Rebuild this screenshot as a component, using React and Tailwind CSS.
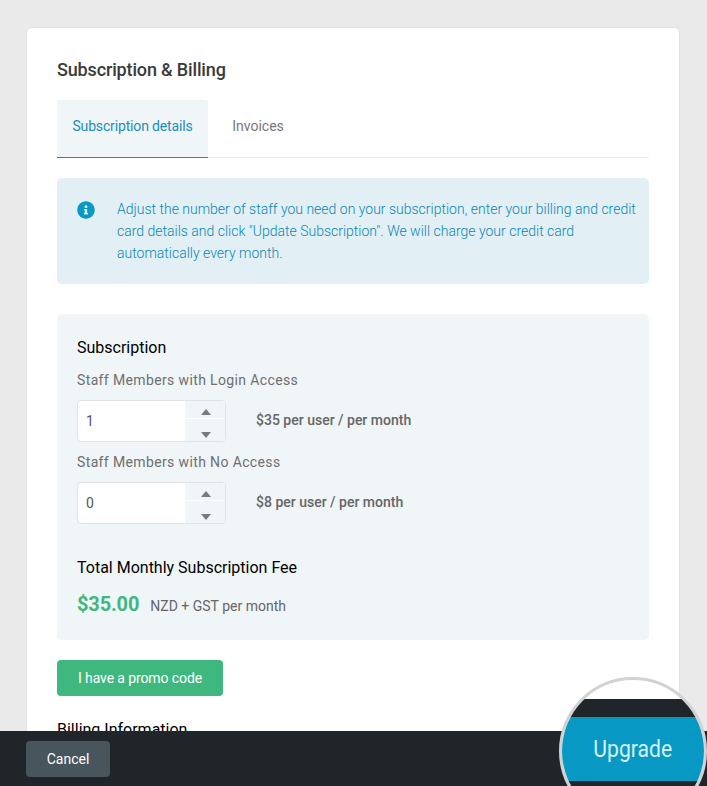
import { FaInfoCircle } from "react-icons/fa";

function Stepper({ value, valueClass }) {
  return (
    <div className="flex h-[42px] w-[149px] overflow-hidden rounded-[4px] border border-[#dfe3e6] bg-white">
      <div className={`flex flex-1 items-center pl-2 text-[14px] ${valueClass}`}>{value}</div>
      <div className="flex w-[40px] flex-col gap-px bg-white">
        <div className="flex flex-1 items-center justify-center bg-[#f0f5f8] pl-px pt-[4px]">
          <div className="h-0 w-0 border-x-[5.5px] border-b-[6px] border-x-transparent border-b-[#7a7a7a]" />
        </div>
        <div className="flex flex-1 items-center justify-center bg-[#f0f5f8] pl-px pt-[9px]">
          <div className="h-0 w-0 border-x-[5.5px] border-t-[6px] border-x-transparent border-t-[#7a7a7a]" />
        </div>
      </div>
    </div>
  );
}

function StaffRow({ label, value, price, valueClass }) {
  return (
    <div>
      <div className="text-[14px] leading-[20px] tracking-[0.37px] text-[#6f6f6f]">{label}</div>
      <div className="mt-[10px] flex items-center gap-[30px]">
        <Stepper value={value} valueClass={valueClass} />
        <span className="pb-[2px] text-[14px] font-medium text-[#666]">{price}</span>
      </div>
    </div>
  );
}

export default function App() {
  return (
    <div className="relative h-[786px] w-[707px] overflow-hidden bg-[#eaeaea] pt-[27px] pl-[26px] font-['Roboto',sans-serif]">
      {/* Card */}
      <div className="h-[800px] w-[654px] rounded-[6px] border border-[#e2e2e2] bg-white px-[30px] pt-[30px]">
        <h1 className="text-[18px] font-medium leading-[24px] tracking-[-0.15px] text-[#3a3a3a]">Subscription &amp; Billing</h1>

        {/* Tabs */}
        <div className="mt-[18px] flex h-[58px] border-b border-[#e9ecee]">
          <div className="-mb-px flex h-[58px] w-[151px] items-center justify-center rounded-t-[3px] border-b border-[#0f8fbd] bg-[#f0f5f8] pb-[4px] text-[14px] tracking-[-0.15px] text-[#1b8fba]">
            Subscription details
          </div>
          <div className="flex w-[100px] items-center justify-center pb-[4px] text-[14px] text-[#777]">Invoices</div>
        </div>

        {/* Info alert */}
        <div className="mt-[20px] flex h-[106px] rounded-[5px] bg-[#e2f0f6] pt-[20px] pl-[20px] pr-[10px]">
          <FaInfoCircle size={18} className="mt-[3px] shrink-0 text-[#0898c4]" />
          <p className="ml-[22px] text-[14px] font-light leading-[22px] text-[#0a86b4]">
            Adjust the number of staff you need on your subscription, enter your billing and credit card details and
            click "Update Subscription". We will charge your credit card automatically every month.
          </p>
        </div>

        {/* Subscription panel */}
        <div className="mt-[30px] h-[326px] rounded-[5px] bg-[#f0f5f8] px-[20px] pt-[24px]">
          <h2 className="text-[16px] leading-[20px] text-black">Subscription</h2>
          <div className="mt-[12px] flex flex-col gap-[10px]">
            <StaffRow label="Staff Members with Login Access" value="1" price="$35 per user / per month" valueClass="text-[#5b4a8a]" />
            <StaffRow label="Staff Members with No Access" value="0" price="$8 per user / per month" valueClass="text-[#555]" />
          </div>
          <h2 className="mt-[34px] text-[16px] leading-[20px] text-black">Total Monthly Subscription Fee</h2>
          <div className="mt-[11px] flex items-baseline gap-[11px]">
            <span className="text-[20px] font-bold tracking-[-0.15px] text-[#3fb87f]">$35.00</span>
            <span className="text-[14px] text-[#666]">NZD + GST per month</span>
          </div>
        </div>

        <button className="mt-[20px] h-[36px] w-[166px] rounded-[4px] bg-[#3fb87f] text-[14px] tracking-[-0.1px] text-white">I have a promo code</button>
        <h2 className="mt-[24px] text-[16px] leading-[20px] text-black">Billing Information</h2>
      </div>

      {/* Bottom bar */}
      <div className="absolute inset-x-0 bottom-0 flex h-[55px] items-center bg-[#202529] pl-[26px]">
        <button className="h-[36px] w-[84px] rounded-[4px] bg-[#48555c] pt-[2px] text-[14px] text-white">Cancel</button>
      </div>

      {/* Magnifier */}
      <div className="absolute top-[677px] left-[559px] flex h-[148px] w-[148px] flex-col overflow-hidden rounded-full border-[3px] border-[#d2d2d2] bg-white">
        <div className="h-[19px] shrink-0" />
        <div className="h-[18px] shrink-0 bg-[#202529]" />
        <div className="flex h-[64px] shrink-0 items-center justify-center bg-[#0898c4] text-[24px] text-[#d8f1f8]">
          <span className="scale-x-[0.88]">Upgrade</span>
        </div>
        <div className="flex-1 bg-[#202529]" />
      </div>
    </div>
  );
}
